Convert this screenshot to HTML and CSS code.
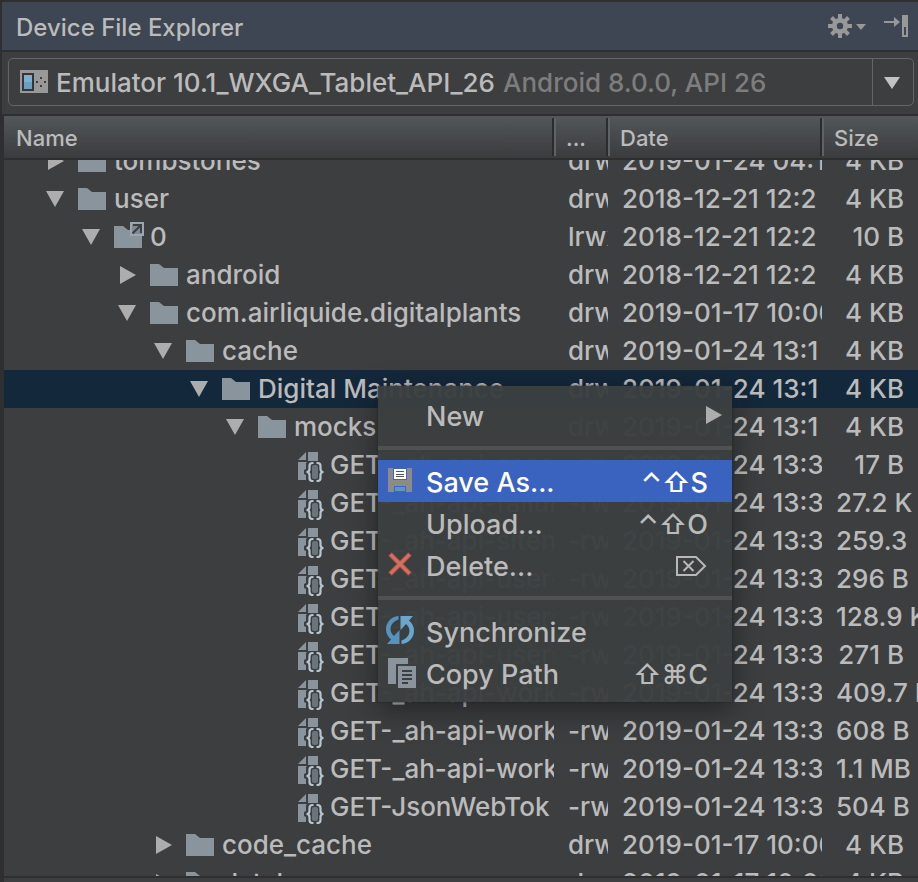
FILE: index.html
```html
<!DOCTYPE html>
<html lang="en">
<head>
<meta charset="utf-8">
<title>Device File Explorer</title>
<link rel="stylesheet" href="styles.css">
</head>
<body>
<svg class="defs" aria-hidden="true">
  <symbol id="folder" viewBox="0 0 28 22"><path fill="#8a949c" d="M0 0h9l5 4h14v18H0z"/></symbol>
  <symbol id="folder-link" viewBox="0 0 30 26">
    <path fill="#8a949c" d="M0 4h9l5 4h14v18H0z"/>
    <path fill="#9aa7b2" d="M16 0h14v14H16z"/><path fill="#7f8a93" d="M18 2h10v10H18z"/>
    <path fill="none" stroke="#3d3e40" stroke-width="2" d="M18.500 11.500 26 4M19 3h8v8"/>
  </symbol>
  <symbol id="json" viewBox="0 -1 32 34">
    <path fill="#8a949c" d="M4 11 12 3v8zM14 3h10v12H12v16H4V13h10z"/>
    <path fill="#3d3e40" d="M14 12h14v21H14l-2-4v-3l-2-1v-4l2-1v-6z"/>
    <path fill="#8a949c" d="M10 13h2v5h-2z"/>
    <rect x="18" y="16" width="6" height="14" rx="2" fill="#69757a"/>
    <path fill="none" stroke="#b8c5cf" stroke-width="2.200" d="M19.500 14h-1c-2 0-3 1-3 3v3c0 2-1 3-3 3 2 0 3 1 3 3v3c0 2 1 3 3 3h1M22.500 14h1c2 0 3 1 3 3v3c0 2 1 3 3 3-2 0-3 1-3 3v3c0 2-1 3-3 3h-1"/>
  </symbol>
  <symbol id="open" viewBox="0 0 18 18"><path fill="#adadad" d="M0 1h18L9 17z"/></symbol>
  <symbol id="closed" viewBox="0 0 18 18"><path fill="#adadad" d="M2 0v18l16-9z"/></symbol>
</svg>

<main class="window">
  <header class="titlebar">
    <h1>Device File Explorer</h1>
    <button class="tool" aria-label="Settings">
      <svg width="38" height="24" viewBox="0 0 38 24"><g fill="#989898"><path fill-rule="evenodd" d="M12 4a8 8 0 1 0 0 16 8 8 0 0 0 0-16zm0 4.800a3.200 3.200 0 1 1 0 6.400 3.200 3.200 0 0 1 0-6.400z"/><path d="M10 0h4v5h-4zM10 19h4v5h-4zM0 10h5v4H0zM19 10h5v4h-5z"/><path d="M10 0h4v5h-4zM10 19h4v5h-4zM0 10h5v4H0zM19 10h5v4h-5z" transform="rotate(45 12 12)"/><path d="M28 10h10l-5 6z"/></g></svg>
    </button>
    <button class="tool" aria-label="Hide">
      <svg width="24" height="24" viewBox="0 0 24 24"><path fill="#989898" d="M0 7h10V3l6 5-6 5V9H0z"/><path fill="#989898" fill-rule="evenodd" d="M18 1h6v22h-6zm2 12v8h2v-8z"/></svg>
    </button>
  </header>

  <div class="device-bar">
    <div class="combo">
      <svg width="28" height="24" viewBox="0 0 28 24" aria-hidden="true"><path fill="#999" d="M0 0h28v23H0z"/><path fill="#353637" d="M2 3h12v18H2z"/><path fill="#7cb0d2" d="M4 5h8v14H4z"/><path fill="#6aa0bf" d="M4 12h8v7H4z"/><path fill="#3d3e40" d="M20 7h2v2h-2zM16 11h2v2h-2zM24 11h2v2h-2zM20 15h2v2h-2z"/></svg>
      <select aria-label="Device"><option>Emulator 10.1_WXGA_Tablet_API_26</option></select>
      <span class="detail">Android 8.0.0, API 26</span>
      <span class="drop"><svg width="16" height="12" viewBox="0 0 16 12" aria-hidden="true"><path fill="#c2c2c2" d="M0 0h16L8 12z"/></svg></span>
    </div>
  </div>

  <table class="files">
    <thead><tr><th>Name</th><th>...</th><th>Date</th><th>Size</th></tr></thead>
    <tbody>
      <tr><td class="l0"><svg class="arrow"><use href="#closed"/></svg><svg class="folder"><use href="#folder"/></svg>tombstones</td><td>drwx</td><td>2019-01-24 04:1</td><td><span>4 KB</span></td></tr>
      <tr><td class="l0"><svg class="arrow"><use href="#open"/></svg><svg class="folder"><use href="#folder"/></svg>user</td><td>drwx</td><td>2018-12-21 12:2</td><td><span>4 KB</span></td></tr>
      <tr><td class="l1"><svg class="arrow"><use href="#open"/></svg><svg class="link"><use href="#folder-link"/></svg>0</td><td>lrwx</td><td>2018-12-21 12:2</td><td><span>10 B</span></td></tr>
      <tr><td class="l2"><svg class="arrow"><use href="#closed"/></svg><svg class="folder"><use href="#folder"/></svg>android</td><td>drwx</td><td>2018-12-21 12:2</td><td><span>4 KB</span></td></tr>
      <tr><td class="l2"><svg class="arrow"><use href="#open"/></svg><svg class="folder"><use href="#folder"/></svg>com.airliquide.digitalplants</td><td>drwx</td><td>2019-01-17 10:00</td><td><span>4 KB</span></td></tr>
      <tr><td class="l3"><svg class="arrow"><use href="#open"/></svg><svg class="folder"><use href="#folder"/></svg>cache</td><td>drwx</td><td>2019-01-24 13:1</td><td><span>4 KB</span></td></tr>
      <tr class="selected"><td class="l4"><svg class="arrow"><use href="#open"/></svg><svg class="folder"><use href="#folder"/></svg>Digital Maintenance</td><td>drwx</td><td>2019-01-24 13:1</td><td><span>4 KB</span></td></tr>
      <tr><td class="l5"><svg class="arrow"><use href="#open"/></svg><svg class="folder"><use href="#folder"/></svg>mocks</td><td>drwx</td><td>2019-01-24 13:1</td><td><span>4 KB</span></td></tr>
      <tr><td class="file"><svg class="json"><use href="#json"/></svg>GET-_ah-api-asse</td><td>-rw-</td><td>2019-01-24 13:3</td><td><span>17 B</span></td></tr>
      <tr><td class="file"><svg class="json"><use href="#json"/></svg>GET-_ah-api-failur</td><td>-rw-</td><td>2019-01-24 13:3</td><td><span>27.2 K</span></td></tr>
      <tr><td class="file"><svg class="json"><use href="#json"/></svg>GET-_ah-api-siten</td><td>-rw-</td><td>2019-01-24 13:3</td><td><span>259.3</span></td></tr>
      <tr><td class="file"><svg class="json"><use href="#json"/></svg>GET-_ah-api-user-</td><td>-rw-</td><td>2019-01-24 13:3</td><td><span>296 B</span></td></tr>
      <tr><td class="file"><svg class="json"><use href="#json"/></svg>GET-_ah-api-users</td><td>-rw-</td><td>2019-01-24 13:3</td><td><span>128.9 K</span></td></tr>
      <tr><td class="file"><svg class="json"><use href="#json"/></svg>GET-_ah-api-users</td><td>-rw-</td><td>2019-01-24 13:3</td><td><span>271 B</span></td></tr>
      <tr><td class="file"><svg class="json"><use href="#json"/></svg>GET-_ah-api-work</td><td>-rw-</td><td>2019-01-24 13:3</td><td><span>409.7 K</span></td></tr>
      <tr><td class="file"><svg class="json"><use href="#json"/></svg>GET-_ah-api-work</td><td>-rw-</td><td>2019-01-24 13:3</td><td><span>608 B</span></td></tr>
      <tr><td class="file"><svg class="json"><use href="#json"/></svg>GET-_ah-api-work</td><td>-rw-</td><td>2019-01-24 13:3</td><td><span>1.1 MB</span></td></tr>
      <tr><td class="file"><svg class="json"><use href="#json"/></svg>GET-JsonWebTok</td><td>-rw-</td><td>2019-01-24 13:3</td><td><span>504 B</span></td></tr>
      <tr><td class="l3"><svg class="arrow"><use href="#closed"/></svg><svg class="folder"><use href="#folder"/></svg>code_cache</td><td>drwx</td><td>2019-01-17 10:00</td><td><span>4 KB</span></td></tr>
      <tr><td class="l3"><svg class="arrow"><use href="#closed"/></svg><svg class="folder"><use href="#folder"/></svg>databases</td><td>drwx</td><td>2019-01-17 10:00</td><td><span>4 KB</span></td></tr>
    </tbody>
  </table>
</main>

<div class="menu" role="menu">
  <button role="menuitem"><span class="icon"></span><span class="label">New</span><svg class="more" width="16" height="18" viewBox="0 0 16 18"><path fill="#adadad" d="M0 0v18l16-9z"/></svg></button>
  <hr>
  <button role="menuitem" class="active"><span class="icon"><svg width="30" height="30" viewBox="0 0 30 30"><path fill="#8b8b89" d="M2 2h24v24H2z"/><path fill="#3a65c1" d="M7 2h14v12H7zM8 20h12v6H8z"/><path fill="#fff" d="M8 3h12v10H8z"/><path stroke="#555" stroke-width="1" d="M10 5.500h8M10 8.500h8M10 10.500h8"/><path fill="#6397b8" d="M9 21h10v4H9z"/></svg></span><span class="label">Save As...</span><kbd>⌃⇧S</kbd></button>
  <button role="menuitem"><span class="icon"></span><span class="label">Upload...</span><kbd>⌃⇧O</kbd></button>
  <button role="menuitem"><span class="icon"><svg width="30" height="30" viewBox="0 0 30 30"><path stroke="#b04f43" stroke-width="5" d="m4 4 20 20M24 4 4 24"/><path stroke="#d27164" stroke-width="3" d="m4.500 4.500 19 19M23.500 4.500l-19 19"/></svg></span><span class="label">Delete...</span><kbd><svg width="32" height="22" viewBox="0 0 32 22" role="img" aria-label="Forward delete"><path fill="none" stroke="#b8b8b8" stroke-width="2" d="M1 1h19l9 9-9 9H1zM7.500 5l10 10M17.500 5l-10 10"/></svg></kbd></button>
  <hr>
  <button role="menuitem"><span class="icon"><svg width="30" height="30" viewBox="0 0 30 30"><path fill="#5592bd" d="M12.500 0C4 1 0 7 0 13.500c0 4 2 7.500 5 10L1 28h12.500V14l-5.500 6C2 15 4 6 12.500 3.500z"/><path fill="#69a5cd" d="M15.500 28C24 27 28 21 28 14.500c0-4-2-7.500-5-10L27 0H14.500v14L20 8c6 5 4 14-4.500 16.500z"/></svg></span><span class="label">Synchronize</span></button>
  <button role="menuitem"><span class="icon"><svg width="30" height="30" viewBox="0 0 30 30"><path fill="#8a949c" d="M2 0h20v6H10v20H2z"/><path fill="#8a949c" d="M12 8h18v22H12z"/><path stroke="#3b3f40" stroke-width="2" d="M16 13h10M16 17h10M16 21h10M16 25h6"/></svg></span><span class="label">Copy Path</span><kbd>⇧⌘C</kbd></button>
</div>
</body>
</html>
```

FILE: styles.css
```css
* { box-sizing: border-box; }

body {
  margin: 0;
  background: #2f2f31;
  color: #bbb;
  font: 450 26px/38px Inter, "Noto Sans", sans-serif;
}

button, select, kbd { font: inherit; color: inherit; }
button { background: none; border: 0; padding: 0; text-align: left; }
svg { flex: none; display: block; }
.defs { position: absolute; width: 0; height: 0; }

.window {
  display: flex;
  flex-direction: column;
  height: 100vh;
  padding: 2px 0 0 2px;
  overflow: hidden;
}

.titlebar {
  display: flex;
  align-items: center;
  gap: 18px;
  height: 48px;
  padding: 0 10px 0 14px;
  background: #3d4652;
}
.titlebar h1 {
  flex: 1;
  margin: 0;
  padding-top: 3px;
  font-size: 24px;
  font-weight: 450;
}

.device-bar {
  margin-top: 2px;
  padding: 6px 4px 8px 6px;
  background: #3d3e40;
}
.combo {
  display: flex;
  align-items: center;
  height: 48px;
  padding-left: 11px;
  border: 1px solid #646566;
  border-radius: 5px;
  white-space: nowrap;
}
.combo select {
  appearance: none;
  margin: 0 8px;
  padding: 2px 0 0;
  border: 0;
  background: none;
}
.combo .detail { flex: 1; padding-top: 2px; color: #7d7d7d; }
.combo .drop {
  display: flex;
  align-items: center;
  justify-content: center;
  align-self: stretch;
  width: 41px;
  padding: 2px 2px 0 0;
  border-left: 1px solid #646566;
}

.files {
  display: flex;
  flex: 1;
  flex-direction: column;
  min-height: 0;
  margin: 2px 0 0 2px;
  padding-bottom: 2px;
  border-bottom: 4px solid #3d3e40;
}
.files tr {
  display: grid;
  grid-template-columns: minmax(0, 1fr) 54px 214px 96px;
}
.files thead {
  display: block;
  background: linear-gradient(#53575a, #3a3b3d);
  border-bottom: 2px solid #2d2e30;
}
.files th {
  margin: 2px 0;
  padding: 0 12px;
  border-right: 2px solid #2b2c2e;
  box-shadow: inset 2px 0 #606365;
  font-size: 22px;
  font-weight: 450;
  text-align: left;
  line-height: 40px;
  height: 38px;
}
.files th:first-child { box-shadow: none; }
.files th:last-child { border: 0; }
.files thead tr { height: 42px; }

.files tbody {
  display: block;
  flex: 1;
  min-height: 0;
  overflow: hidden;
  background: #3d3e40;
}
.files tbody tr:first-child { margin-top: -18px; }
.files td {
  height: 38px;
  padding: 0 0 0 14px;
  overflow: hidden;
  white-space: nowrap;
}
.files td:first-child { display: flex; align-items: center; }
.files td:last-child { display: flex; padding-right: 14px; overflow: visible; }
.files td:last-child span { margin-left: auto; }
.files .selected { background: #14283b; }

.files .l0 { padding-left: 42px; }
.files .l1 { padding-left: 78px; }
.files .l2 { padding-left: 114px; }
.files .l3 { padding-left: 150px; }
.files .l4 { padding-left: 186px; }
.files .l5 { padding-left: 222px; }
.files .file { padding-left: 290px; }

.arrow { width: 18px; height: 18px; margin-right: 14px; }
.folder { width: 28px; height: 22px; margin-right: 8px; }
.link { width: 30px; height: 26px; margin: 0 6px 4px 0; }
.json { width: 32px; height: 34px; margin-right: 4px; }

.menu {
  position: absolute;
  top: 386px;
  left: 378px;
  width: 354px;
  padding: 8px 0;
  background: rgba(59, 63, 64, 0.97);
  box-shadow: 0 0 2px #222, 0 8px 28px rgba(0, 0, 0, 0.4);
  font-size: 27px;
}
.menu button {
  display: flex;
  align-items: center;
  width: 100%;
  height: 42px;
  padding: 0 24px 0 8px;
}
.menu .active { background: rgba(57, 100, 195, 0.97); color: #fff; }
.menu .icon { width: 30px; height: 30px; margin-right: 10px; }
.menu .label { padding-top: 4px; }
.menu kbd { margin-left: auto; padding-top: 4px; }
.menu .more { margin: 0 -14px 0 auto; }
.menu hr {
  height: 4px;
  margin: 10px 0;
  border: 0;
  background: #515151;
}
```
